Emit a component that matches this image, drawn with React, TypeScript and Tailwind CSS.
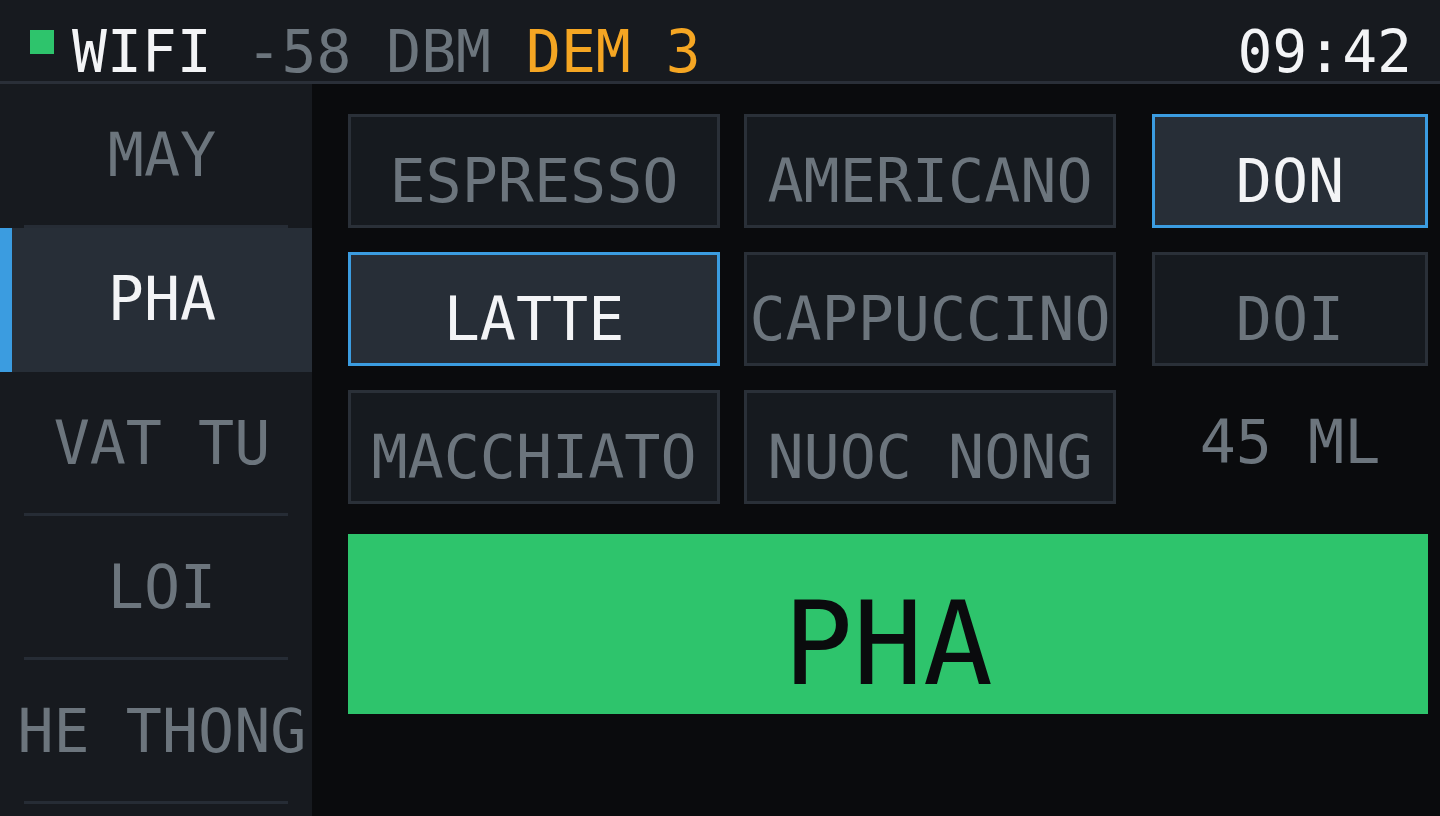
import React from "react";

const sideItems = [
  { label: "MAY", active: false },
  { label: "PHA", active: true },
  { label: "VAT TU", active: false },
  { label: "LOI", active: false },
  { label: "HE THONG", active: false },
];

function Btn({ label, active, extra }: { label: string; active?: boolean; extra?: string }) {
  return (
    <div
      className={
        "h-[114px] border-[3px] flex items-center justify-center pt-5 text-[60px] leading-none whitespace-pre " +
        (active
          ? "bg-[#272e37] border-[#3b9ce0] text-[#f3f4f6] "
          : "bg-[#161a1f] border-[#2a3038] text-[#6c757d] ") +
        (extra ?? "")
      }
    >
      {label}
    </div>
  );
}

export default function App() {
  return (
    <div className="w-[1440px] h-[816px] flex flex-col bg-[#0a0b0d] overflow-hidden font-['DejaVu_Sans_Mono',monospace]">
      <header className="h-[84px] shrink-0 bg-[#171a1f] border-b-[3px] border-[#2a2f38] flex items-start justify-between pl-[30px] pr-[28px] pt-[23px]">
        <div className="flex items-start">
          <div className="w-6 h-6 bg-[#2ec46c] mt-[7px]" />
          <div className="ml-[18px] text-[58px] leading-none whitespace-pre">
            <span className="text-[#f3f4f6]">WIFI</span>
            <span className="text-[#6c757d]"> -58 DBM </span>
            <span className="text-[#f5a623]">DEM 3</span>
          </div>
        </div>
        <div className="text-[58px] leading-none text-[#f3f4f6]">09:42</div>
      </header>
      <div className="flex flex-1 min-h-0">
        <aside className="w-[312px] shrink-0 bg-[#171a1f] flex flex-col">
          {sideItems.map((it) => (
            <div
              key={it.label}
              className={"h-[144px] shrink-0 flex " + (it.active ? "bg-[#272e37]" : "")}
            >
              <div className={"w-3 " + (it.active ? "bg-[#3b9ce0]" : "")} />
              <div className="flex-1 flex flex-col">
                <div
                  className={
                    "flex-1 flex items-center justify-center text-[60px] leading-none whitespace-pre " +
                    (it.active ? "text-[#f3f4f6]" : "text-[#6c757d]")
                  }
                >
                  {it.label}
                </div>
                <div className={"h-[3px] ml-3 mr-6 " + (it.active ? "bg-[#272e37]" : "bg-[#262c35]")} />
              </div>
            </div>
          ))}
        </aside>
        <main className="flex-1 pl-9 pr-3 pt-[30px] flex flex-col">
          <div className="grid grid-cols-[372px_372px_1fr] gap-x-6 gap-y-6">
            <Btn label="ESPRESSO" />
            <Btn label="AMERICANO" />
            <Btn label="DON" active extra="ml-3" />
            <Btn label="LATTE" active />
            <Btn label="CAPPUCCINO" />
            <Btn label="DOI" extra="ml-3" />
            <Btn label="MACCHIATO" />
            <Btn label="NUOC NONG" />
            <div className="ml-3 h-[114px] flex items-center justify-center pb-[10px] text-[60px] leading-none text-[#6c757d] whitespace-pre">
              45 ML
            </div>
          </div>
          <div className="mt-[30px] h-[180px] bg-[#2ec46c] flex items-center justify-center pt-[40px] text-[116px] leading-none text-[#0a0b0d]">
            PHA
          </div>
        </main>
      </div>
    </div>
  );
}
